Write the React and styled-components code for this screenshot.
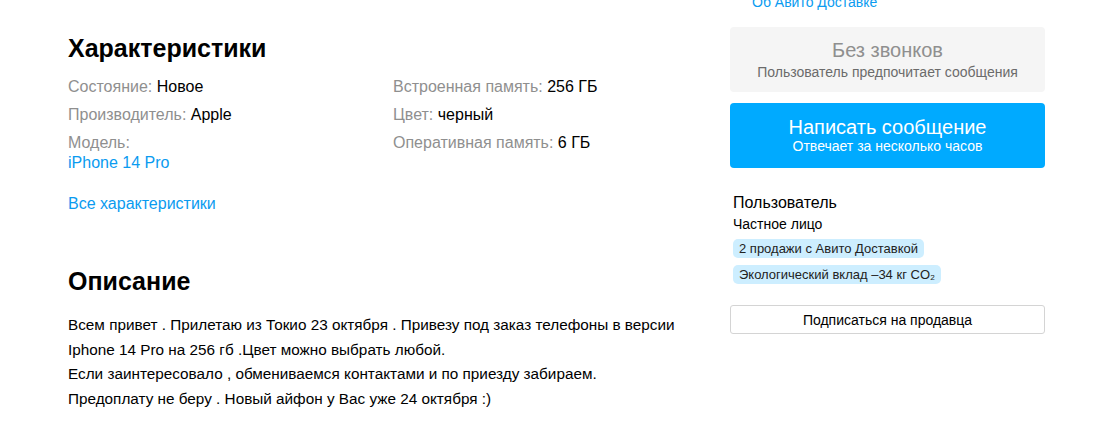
import React from "react";
import styled, { createGlobalStyle } from "styled-components";

const Global = createGlobalStyle`
  html, body { margin: 0; padding: 0; background: #fff; }
  body { font-family: Arial, "Liberation Sans", sans-serif; color: #000; overflow: hidden; }
  * { box-sizing: border-box; }
`;

const Page = styled.div`
  width: 1098px;
  height: 440px;
  display: flex;
  align-items: flex-start;
  padding-left: 68px;
  overflow: hidden;
`;

const Main = styled.div`
  width: 640px;
  display: flex;
  flex-direction: column;
`;

const Heading = styled.h2`
  margin: ${(p) => p.$mt || 0}px 0 0;
  font-size: 25px;
  line-height: 30px;
  font-weight: 700;
`;

const Params = styled.div`
  margin-top: 14px;
  display: grid;
  grid-template-columns: 325px 1fr;
  grid-auto-flow: column;
  grid-template-rows: repeat(3, auto);
  row-gap: 8px;
  align-items: start;
`;

const Param = styled.div`
  font-size: 16px;
  line-height: 20px;
`;

const Label = styled.span`
  color: #8f8f8f;
`;

const BlockLink = styled.a`
  display: block;
  color: #0a9bf0;
  text-decoration: none;
`;

const AllLink = styled.a`
  margin-top: 21px;
  font-size: 16px;
  line-height: 20px;
  color: #0a9bf0;
  text-decoration: none;
`;

const Description = styled.p`
  margin: 17px 0 0;
  font-size: 15.3px;
  line-height: 24.7px;
`;

const Side = styled.aside`
  width: 315px;
  margin-left: 22px;
  margin-top: -8px;
  display: flex;
  flex-direction: column;
`;

const DeliveryLink = styled.a`
  padding-left: 22px;
  font-size: 14px;
  line-height: 20px;
  color: #0a9bf0;
  text-decoration: none;
`;

const Card = styled.div`
  margin-top: ${(p) => p.$mt}px;
  height: 65px;
  border-radius: 4px;
  background: ${(p) => (p.$primary ? "#00aaff" : "#f5f5f5")};
  color: ${(p) => (p.$primary ? "#fff" : "#8f8f8f")};
  display: flex;
  flex-direction: column;
  align-items: center;
  justify-content: center;
  text-align: center;
`;

const CardTitle = styled.div`
  font-size: 20px;
  line-height: 24px;
  margin-top: ${(p) => (p.$primary ? -2 : 0)}px;
`;

const CardSub = styled.div`
  font-size: 14px;
  line-height: 17px;
  margin-top: ${(p) => (p.$primary ? -1 : 2)}px;
  color: ${(p) => (p.$primary ? "#fff" : "#6b6b6b")};
`;

const Seller = styled.div`
  margin-top: 25px;
  padding-left: 3px;
  display: flex;
  flex-direction: column;
  align-items: flex-start;
`;

const SellerName = styled.div`
  font-size: 16px;
  line-height: 20px;
`;

const SellerType = styled.div`
  font-size: 14px;
  line-height: 17px;
  margin-top: 3px;
`;

const Badge = styled.span`
  margin-top: ${(p) => p.$mt}px;
  background: #cdeeff;
  border-radius: 5px;
  padding: 0 6px;
  font-size: 13px;
  line-height: 19px;
  height: 19px;
  color: #222;
`;

const SubscribeButton = styled.button`
  margin-top: 21px;
  height: 29px;
  width: 315px;
  border: 1px solid #d4d4d4;
  border-radius: 3px;
  background: #fff;
  font-family: inherit;
  font-size: 14px;
  color: #000;
  cursor: pointer;
`;

export default function App() {
  return (
    <>
      <Global />
      <Page>
        <Main>
          <Heading $mt={33}>Характеристики</Heading>
          <Params>
            <Param><Label>Состояние: </Label>Новое</Param>
            <Param><Label>Производитель: </Label>Apple</Param>
            <Param>
              <Label>Модель: </Label>
              <BlockLink href="#">iPhone 14 Pro</BlockLink>
            </Param>
            <Param><Label>Встроенная память: </Label>256 ГБ</Param>
            <Param><Label>Цвет: </Label>черный</Param>
            <Param><Label>Оперативная память: </Label>6 ГБ</Param>
          </Params>
          <AllLink href="#">Все характеристики</AllLink>
          <Heading $mt={52}>Описание</Heading>
          <Description>
            Всем привет . Прилетаю из Токио 23 октября . Привезу под заказ телефоны в версии
            <br />
            Iphone 14 Pro на 256 гб .Цвет можно выбрать любой.
            <br />
            Если заинтересовало , обмениваемся контактами и по приезду забираем.
            <br />
            Предоплату не беру . Новый айфон у Вас уже 24 октября :)
          </Description>
        </Main>
        <Side>
          <DeliveryLink href="#">Об Авито Доставке</DeliveryLink>
          <Card $mt={15}>
            <CardTitle>Без звонков</CardTitle>
            <CardSub>Пользователь предпочитает сообщения</CardSub>
          </Card>
          <Card $primary $mt={11}>
            <CardTitle $primary>Написать сообщение</CardTitle>
            <CardSub $primary>Отвечает за несколько часов</CardSub>
          </Card>
          <Seller>
            <SellerName>Пользователь</SellerName>
            <SellerType>Частное лицо</SellerType>
            <Badge $mt={6}>2 продажи с Авито Доставкой</Badge>
            <Badge $mt={7}>Экологический вклад –34 кг CO₂</Badge>
          </Seller>
          <SubscribeButton>Подписаться на продавца</SubscribeButton>
        </Side>
      </Page>
    </>
  );
}
